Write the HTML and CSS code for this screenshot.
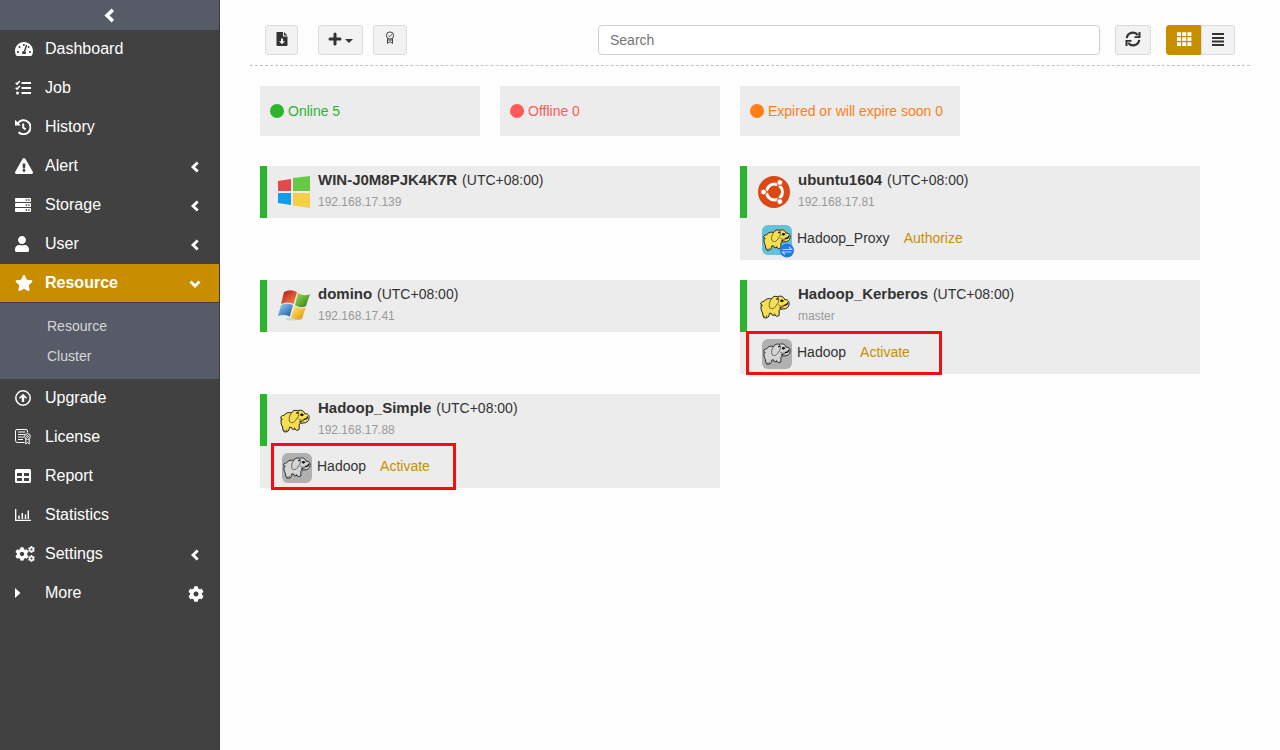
FILE: index.html
```html
<!DOCTYPE html>
<html lang="en">
<head>
<meta charset="utf-8">
<title>Resource</title>
<link rel="stylesheet" href="styles.css">
</head>
<body>
<svg class="sprite" aria-hidden="true">
  <symbol id="chev-left" viewBox="0 0 12 12"><path d="M8.700 1.500 4 6l4.700 4.500" fill="none" stroke="currentColor" stroke-width="2.800"/></symbol>
  <symbol id="chev-down" viewBox="0 0 12 12"><path d="M1.500 3.500 6 8l4.500-4.500" fill="none" stroke="currentColor" stroke-width="2.800"/></symbol>
  <symbol id="cog" viewBox="0 0 512 512"><path fill="currentColor" d="M487.4 315.7l-42.6-24.6c4.3-23.2 4.3-47 0-70.2l42.6-24.6c4.9-2.8 7.1-8.6 5.5-14-11.1-35.6-30-67.8-54.7-94.6-3.8-4.1-10-5.1-14.8-2.3L380.8 110c-17.9-15.4-38.5-27.3-60.8-35.1V25.8c0-5.6-3.9-10.5-9.4-11.7-36.7-8.2-74.3-7.8-109.2 0-5.5 1.2-9.4 6.1-9.4 11.7V75c-22.2 7.9-42.8 19.8-60.8 35.1L88.7 85.5c-4.9-2.8-11-1.9-14.8 2.3-24.7 26.7-43.6 58.9-54.7 94.6-1.7 5.4.6 11.2 5.5 14L67.3 221c-4.3 23.2-4.3 47 0 70.2l-42.6 24.6c-4.9 2.8-7.1 8.6-5.5 14 11.1 35.6 30 67.8 54.7 94.6 3.8 4.1 10 5.1 14.8 2.3l42.6-24.6c17.9 15.4 38.5 27.3 60.8 35.1v49.2c0 5.6 3.9 10.5 9.4 11.7 36.7 8.2 74.3 7.8 109.2 0 5.5-1.2 9.4-6.1 9.4-11.7v-49.2c22.2-7.9 42.8-19.8 60.8-35.1l42.6 24.6c4.9 2.8 11 1.9 14.8-2.3 24.7-26.7 43.6-58.9 54.7-94.6 1.5-5.5-.7-11.3-5.6-14.1zM256 336c-44.1 0-80-35.9-80-80s35.9-80 80-80 80 35.9 80 80-35.9 80-80 80z"/></symbol>
  <symbol id="elephant" viewBox="0 0 90 70">
    <path class="skin line" d="M12 18C18 10 27 8 34 11 37 4 46 1 53 4 63 0 72 4 74 13 84 12 89 19 87 28 86 36 79 41 70 41L62 42 57 46C58 51 58 56 57 61L49 63 45 59 37 60 34 54 28 54C28 60 27 65 22 67L13 68 9 62 8 53C3 46 2 37 4 29L2 23 7 19Z"/>
    <path class="line thin" d="M34 11C28 19 26 29 29 37 36 43 43 39 47 33L53 24C57 20 57 10 53 5M58 42C61 37 67 36 72 34M55 28C59 33 66 34 71 31M13 62V67M20 60V66M43 54 47 61M4 29 9 31"/>
    <path class="ink" d="M62 13Q69 11 72 17L66 21 60 18ZM48 10 54 8 56 11 50 14ZM71 28Q80 29 82 20L85 24Q82 34 71 32ZM59 36 64 34 64 38 59 40Z"/>
  </symbol>
</svg>
<div class="app">
  <aside class="sidebar">
    <button class="collapse" aria-label="Collapse menu"><svg class="ic-collapse"><use href="#chev-left"/></svg></button>
    <nav>
      <a class="item" href="#"><span class="icon"><svg width="18" height="16" viewBox="0 0 576 512"><path fill="currentColor" d="M288 32C128.94 32 0 160.94 0 320c0 52.8 14.25 102.26 39.06 144.8 5.61 9.62 16.3 15.2 27.44 15.2h443c11.14 0 21.83-5.58 27.44-15.2C561.75 422.26 576 372.8 576 320c0-159.06-128.94-288-288-288zm0 64c14.71 0 26.58 10.13 30.32 23.65-1.11 2.26-2.64 4.23-3.45 6.67l-9.22 27.67c-5.13 3.49-10.97 6.01-17.64 6.01-17.67 0-32-14.33-32-32S270.33 96 288 96zM96 384c-17.67 0-32-14.33-32-32s14.33-32 32-32 32 14.33 32 32-14.33 32-32 32zm48-160c-17.67 0-32-14.33-32-32s14.33-32 32-32 32 14.33 32 32-14.33 32-32 32zm246.77-72.41l-61.33 184C343.13 347.33 352 364.54 352 384c0 11.72-3.38 22.55-8.88 32H232.88c-5.5-9.45-8.88-20.28-8.88-32 0-33.94 26.5-61.43 59.9-63.59l61.34-184.01c4.17-12.56 17.73-19.45 30.36-15.17 12.57 4.19 19.35 17.79 15.17 30.36zm14.66 57.2l15.52-46.55c3.47-1.29 7.13-2.23 11.05-2.23 17.67 0 32 14.33 32 32s-14.33 32-32 32c-11.38-.01-20.89-6.28-26.57-15.22zM480 384c-17.67 0-32-14.33-32-32s14.33-32 32-32 32 14.33 32 32-14.33 32-32 32z"/></svg></span>Dashboard</a>
      <a class="item" href="#"><span class="icon"><svg width="17" height="16" viewBox="0 0 17 16" fill="none" stroke="currentColor"><path stroke-width="2" d="M6.5 3H16M6.5 8H16M6.5 13H16"/><path stroke-width="1.5" d="m.7 2.8 1.3 1.3L4.8 1M.7 7.8 2 9.1 4.8 6"/><circle cx="2.5" cy="13" r="1.5" fill="currentColor" stroke="none"/></svg></span>Job</a>
      <a class="item" href="#"><span class="icon"><svg width="16" height="16" viewBox="0 0 16 16" fill="none" stroke="currentColor"><path stroke-width="2" d="M2.7 4.4A7 7 0 1 1 3.6 13.2M8.2 4.5v4l2.4 1.9"/><path fill="currentColor" stroke="none" d="M0 .8V6.5h5.8Z"/></svg></span>History</a>
      <a class="item" href="#"><span class="icon"><svg width="18" height="16" viewBox="0 0 576 512"><path fill="currentColor" d="M569.517 440.013C587.975 472.007 564.806 512 527.94 512H48.054c-36.937 0-59.999-40.055-41.577-71.987L246.423 23.985c18.467-32.009 64.72-31.951 83.154 0l239.94 416.028zM288 354c-25.405 0-46 20.595-46 46s20.595 46 46 46 46-20.595 46-46-20.595-46-46-46zm-43.673-165.346l7.418 136c.347 6.364 5.609 11.346 11.982 11.346h48.546c6.373 0 11.635-4.982 11.982-11.346l7.418-136c.375-6.874-5.098-12.654-11.982-12.654h-63.383c-6.884 0-12.356 5.78-11.981 12.654z"/></svg></span>Alert<svg class="arrow"><use href="#chev-left"/></svg></a>
      <a class="item" href="#"><span class="icon"><svg width="16" height="16" viewBox="0 0 16 16"><path fill="currentColor" fill-rule="evenodd" d="M.7 1h14.6q.7 0 .7.7v2.6q0 .7-.7.7H.7Q0 5 0 4.300V1.700Q0 1 .7 1ZM10.700 2.300v1.400h1.400V2.300Zm2.500 0v1.400h1.400V2.300ZM.7 6h14.600q.7 0 .7.7v2.600q0 .7-.7.7H.7Q0 10 0 9.300V6.700Q0 6 .7 6Zm10 1.300v1.400h1.400V7.300Zm2.500 0v1.400h1.400V7.300ZM.7 11h14.600q.7 0 .7.7v2.600q0 .7-.7.7H.7Q0 15 0 14.300v-2.600Q0 11 .7 11Zm10 1.300v1.400h1.400v-1.400Zm2.500 0v1.400h1.400v-1.400Z"/></svg></span>Storage<svg class="arrow"><use href="#chev-left"/></svg></a>
      <a class="item" href="#"><span class="icon"><svg width="14" height="16" viewBox="0 0 448 512"><path fill="currentColor" d="M224 256c70.7 0 128-57.3 128-128S294.7 0 224 0 96 57.3 96 128s57.3 128 128 128zm89.6 32h-16.7c-22.2 10.2-46.9 16-72.9 16s-50.6-5.8-72.9-16h-16.7C60.2 288 0 348.2 0 422.4V464c0 26.500 21.500 48 48 48h352c26.500 0 48-21.500 48-48v-41.600c0-74.200-60.200-134.400-134.400-134.400z"/></svg></span>User<svg class="arrow"><use href="#chev-left"/></svg></a>
      <a class="item active" href="#"><span class="icon"><svg width="18" height="16" viewBox="0 0 576 512"><path fill="currentColor" d="M259.3 17.8L194 150.2 47.9 171.5c-26.2 3.8-36.7 36.1-17.7 54.6l105.7 103-25 145.5c-4.5 26.3 23.2 46 46.4 33.7L288 439.6l130.7 68.7c23.2 12.2 50.9-7.4 46.4-33.7l-25-145.5 105.7-103c19-18.5 8.5-50.8-17.7-54.6L382 150.2 316.7 17.8c-11.7-23.6-45.6-23.9-57.4 0z"/></svg></span>Resource<svg class="arrow"><use href="#chev-down"/></svg></a>
      <div class="submenu"><a href="#">Resource</a><a href="#">Cluster</a></div>
      <a class="item" href="#"><span class="icon"><svg width="16" height="16" viewBox="0 0 16 16"><circle cx="8" cy="8" r="7.200" fill="none" stroke="currentColor" stroke-width="1.500"/><path fill="currentColor" d="m8 3.700 4 4.100-1 1L9.200 7.300V12H6.800V7.300L5 8.800l-1-1Z"/></svg></span>Upgrade</a>
      <a class="item" href="#"><span class="icon"><svg width="16" height="16" viewBox="0 0 16 16" fill="none" stroke="currentColor"><path d="M12.500 3.500v-1.500q0-1.500-1.500-1.500H2Q.5.500.5 2v9.500q0 2 2 2H9.500M3 3h7.500M3 5.500h7M3 8h6M3 10.500h5"/><circle cx="12.500" cy="7.500" r="2.800"/><circle cx="12.500" cy="7.500" r=".9"/><path d="M10.800 10v5l1.700-1.500 1.700 1.500v-5"/></svg></span>License</a>
      <a class="item" href="#"><span class="icon"><svg width="16" height="16" viewBox="0 0 16 16"><path fill="currentColor" fill-rule="evenodd" d="M1.500 1h13Q16 1 16 2.500v11q0 1.500-1.500 1.500h-13Q0 15 0 13.500v-11Q0 1 1.500 1ZM2 5v3h5V5Zm7 0v3h5V5ZM2 10v3h5v-3Zm7 0v3h5v-3Z"/></svg></span>Report</a>
      <a class="item" href="#"><span class="icon"><svg width="16" height="16" viewBox="0 0 16 16" fill="none" stroke="currentColor"><path stroke-width="1.300" d="M.7 2v11.400H16"/><path stroke-width="1.500" d="M4 8.500V12M7.300 6v6M10.500 7.500V12M13.300 3.500V12"/></svg></span>Statistics</a>
      <a class="item" href="#"><span class="icon"><svg width="20" height="16" viewBox="0 0 20 16"><use href="#cog" x="0" y="1" width="14" height="14"/><use href="#cog" x="13" y="0" width="7" height="7"/><use href="#cog" x="13" y="9" width="7" height="7"/></svg></span>Settings<svg class="arrow"><use href="#chev-left"/></svg></a>
      <a class="item" href="#"><span class="icon"><svg width="6" height="10" viewBox="0 0 6 10"><path fill="currentColor" d="M0 0l5.500 5L0 10Z"/></svg></span>More<svg class="gear"><use href="#cog"/></svg></a>
    </nav>
  </aside>
  <main>
    <div class="toolbar">
      <button class="btn download" aria-label="Download"><svg width="12" height="16" viewBox="0 0 12 16"><path fill="#333" fill-rule="evenodd" d="M1 1h6v4.500h4.500V14q0 1-1 1H1.500q-1 0-1-1V1.500ZM5 7.500v2.800H3l3 3 3-3H7V7.500ZM8 1l3.500 3.500H8Z"/></svg></button>
      <button class="btn add" aria-label="Add"><svg width="26" height="16" viewBox="0 0 26 16"><path fill="none" stroke="#333" stroke-width="3" stroke-linecap="round" d="M7 3v10M2 8h10"/><path fill="#333" d="M17 8h8l-4 4Z"/></svg></button>
      <button class="btn badge" aria-label="License"><svg width="10" height="14" viewBox="0 0 10 14" fill="none" stroke="#444"><circle cx="5" cy="4.500" r="3.600"/><path d="m3.300 4.500 1.300 1.300L7 3.200M2.500 7.500v5L5 10.500l2.500 2v-5M2.500 9h5"/></svg></button>
      <input class="search" type="search" placeholder="Search" aria-label="Search">
      <button class="btn refresh" aria-label="Refresh"><svg width="16" height="16" viewBox="0 0 16 16" fill="none" stroke="#333"><path stroke-width="2.200" d="M1.800 7.200a6.100 6.100 0 0 1 11-3M14.200 8.800a6.100 6.100 0 0 1-11 3"/><path fill="#333" stroke="none" d="M15.500 1v6H9.500V5.200h4V1ZM.5 15V9h6v1.800h-4V15Z"/></svg></button>
      <div class="views">
        <button class="btn grid-view" aria-label="Grid view"><svg width="16" height="16" viewBox="0 0 16 16"><path stroke="#fff" stroke-width="3.800" stroke-dasharray="4 1.200" d="M1 3.200h15M1 8.200h15M1 13.200h15"/></svg></button>
        <button class="btn list-view" aria-label="List view"><svg width="14" height="16" viewBox="0 0 14 16"><path stroke="#333" stroke-width="2" d="M1 3h12M1 7h12M1 10.500h12M1 14h12"/></svg></button>
      </div>
    </div>
    <div class="stats">
      <div class="stat online"><i></i>Online 5</div>
      <div class="stat offline"><i></i>Offline 0</div>
      <div class="stat expired"><i></i>Expired or will expire soon 0</div>
    </div>
    <div class="cards">
      <article class="card"><div class="host">
        <svg class="os" viewBox="0 0 32 32"><path fill="#e14b4b" d="m0 5 13-2v12H0Z"/><path fill="#68c944" d="m15 2 17-2v15H15Z"/><path fill="#0f9fe8" d="M0 17h13v12L0 27Z"/><path fill="#f7ce47" d="M15 17h17v15l-17-2.500Z"/></svg>
        <div><p class="name"><b>WIN-J0M8PJK4K7R</b> (UTC+08:00)</p><p class="ip">192.168.17.139</p></div>
      </div></article>
      <article class="card"><div class="host">
        <svg class="os" viewBox="0 0 32 32"><circle cx="16" cy="16" r="16" fill="#dc4814"/><circle cx="16.500" cy="16" r="8" fill="none" stroke="#fff" stroke-width="3"/><path stroke="#dc4814" stroke-width="1.500" d="M16.500 16H5M16.500 16l6-10.400M16.500 16l6 10.400"/><g fill="#fff" stroke="#dc4814"><circle cx="5.500" cy="16" r="2.900"/><circle cx="21.800" cy="6.500" r="2.900"/><circle cx="21.800" cy="25.500" r="2.900"/></g><circle cx="16.500" cy="16" r="6" fill="#dc4814"/></svg>
        <div><p class="name"><b>ubuntu1604</b> (UTC+08:00)</p><p class="ip">192.168.17.81</p></div>
      </div>
      <div class="agent"><svg class="app-icon" viewBox="0 0 32 33"><rect width="30" height="30" rx="6" fill="#68bfd8"/><use href="#elephant" x="1" y="4" width="28" height="22"/><circle cx="25" cy="25.500" r="7" fill="#1e78f5"/><path fill="none" stroke="#b9dbff" stroke-width="1.200" d="M20.500 24.500h9L27 22M29.500 27h-9l2.500 2.500"/></svg><span>Hadoop_Proxy</span><a href="#">Authorize</a></div></article>
      <article class="card"><div class="host">
        <svg class="os" viewBox="0 0 32 32"><defs><linearGradient id="wr" x2="1" y2="1"><stop stop-color="#a91610"/><stop offset="1" stop-color="#ff8950"/></linearGradient><linearGradient id="wg" x2="1" y2="1"><stop stop-color="#a8dc5c"/><stop offset="1" stop-color="#237d18"/></linearGradient><linearGradient id="wb" x2="1" y2="1"><stop stop-color="#9cd4f5"/><stop offset="1" stop-color="#1753a5"/></linearGradient><linearGradient id="wy" x2="1" y2="1"><stop stop-color="#fff174"/><stop offset="1" stop-color="#e58a0c"/></linearGradient></defs><ellipse cx="16" cy="29" rx="9" ry="1.500" fill="#d4d4d4"/><path fill="url(#wr)" d="M6 2q6-3.500 13 0l-3.300 12q-6-3-12.700 0Z"/><path fill="url(#wg)" d="M20 3q6 4 12 1l-4 12q-5 3-11-1Z"/><path fill="url(#wb)" d="M3 15q6-3 12 0l-3.200 11.500Q6 24 0 26Z"/><path fill="url(#wy)" d="M16.500 16q6 4 11.300 1.500L24 28.500q-5 3-11-1.500Z"/></svg>
        <div><p class="name"><b>domino</b> (UTC+08:00)</p><p class="ip">192.168.17.41</p></div>
      </div></article>
      <article class="card"><div class="host">
        <svg class="os" viewBox="0 0 32 32"><use href="#elephant" x="2" y="5" width="30" height="24"/></svg>
        <div><p class="name"><b>Hadoop_Kerberos</b> (UTC+08:00)</p><p class="ip">master</p></div>
      </div>
      <div class="agent gray"><svg class="app-icon" viewBox="0 0 32 33"><rect width="30" height="30" rx="6" fill="#b0b0b0"/><use href="#elephant" x="1" y="4" width="28" height="22"/></svg><span>Hadoop</span><a href="#">Activate</a></div><div class="mark mark-kerberos"></div></article>
      <article class="card"><div class="host">
        <svg class="os" viewBox="0 0 32 32"><use href="#elephant" x="2" y="5" width="30" height="24"/></svg>
        <div><p class="name"><b>Hadoop_Simple</b> (UTC+08:00)</p><p class="ip">192.168.17.88</p></div>
      </div>
      <div class="agent gray"><svg class="app-icon" viewBox="0 0 32 33"><rect width="30" height="30" rx="6" fill="#b0b0b0"/><use href="#elephant" x="1" y="4" width="28" height="22"/></svg><span>Hadoop</span><a href="#">Activate</a></div><div class="mark mark-simple"></div></article>
    </div>
  </main>
</div>
</body>
</html>
```
FILE: styles.css
```css
* { box-sizing: border-box; }
body { margin: 0; background: #fefefe; color: #333; font: 14px/20px "Liberation Sans", Arial, sans-serif; }
a { text-decoration: none; }
button { font: inherit; cursor: pointer; }
p { margin: 0; }
svg { display: block; flex: none; }
.sprite { position: absolute; width: 0; height: 0; }
.app { display: flex; min-height: 100vh; }

.sidebar { flex: none; width: 220px; background: #414141; border-right: 1px solid #3b3b3e; }
.collapse { display: flex; align-items: center; justify-content: center; width: 100%; height: 30px; padding: 0; border: 0; background: #565b67; color: #fff; }
.ic-collapse { width: 15px; height: 15px; }
.item { display: flex; align-items: center; height: 39px; padding: 0 15px; border-bottom: 1px solid #414141; color: #fff; font-size: 16px; }
.icon { display: flex; width: 30px; }
.item.active { background: #c88e00; font-weight: bold; }
.arrow { width: 12px; height: 12px; margin: 2px 3px 0 auto; }
.gear { width: 16px; height: 16px; margin: 2px 0 0 auto; }
.submenu { display: flex; flex-direction: column; padding: 8px 0; background: #565b67; }
.submenu a { padding-left: 47px; line-height: 30px; color: #d6d6d6; }

main { flex: 1; min-width: 0; padding: 25px 30px; }
.toolbar { display: flex; padding: 0 15px 10px; border-bottom: 1px dashed #c4c4c4; }
.btn { display: flex; align-items: center; justify-content: center; height: 30px; padding: 0 0 2px; border: 1px solid #dadada; border-radius: 3px; background: #f2f2f2; }
.download { width: 33px; margin-right: 20px; }
.add { width: 45px; margin-right: 10px; }
.badge { width: 34px; padding-bottom: 4px; }
.search { width: 502px; height: 30px; margin: 0 15px 0 auto; padding: 0 11px; border: 1px solid #ccd0d6; border-radius: 4px; background: #fff; color: #333; font: inherit; appearance: none; }
.search::placeholder { color: #757575; }
.refresh { width: 36px; margin-right: 15px; }
.views { display: flex; }
.grid-view { width: 35px; border-color: #c88e00; border-radius: 3px 0 0 3px; background: #c88e00; }
.list-view { width: 34px; border-radius: 0 3px 3px 0; }

.stats { display: grid; grid-template-columns: repeat(4, 1fr); gap: 20px; padding: 20px 50px 30px 10px; }
.stat { display: flex; align-items: center; gap: 4px; height: 50px; padding: 0 10px; background: #ececec; white-space: nowrap; }
.stat i { width: 14px; height: 14px; border-radius: 50%; background: currentColor; }
.online { color: #2bb52b; }
.offline { color: #ff5a5a; }
.expired { color: #ff7f16; }

.cards { display: grid; grid-template-columns: 1fr 1fr; grid-auto-rows: 94px; align-items: start; gap: 20px; padding: 0 50px 0 10px; }
.card { position: relative; background: #ececec; }
.host { display: flex; gap: 8px; height: 52px; padding: 4px 0 0 11px; border-left: 7px solid #2bb52b; }
.os { width: 32px; height: 32px; margin-top: 6px; }
.name b { margin-right: 1px; font-size: 15px; }
.ip { margin-top: 2px; color: #999; font-size: 12px; }
.agent { display: flex; align-items: center; height: 42px; padding: 0 0 2px 22px; }
.app-icon { width: 32px; height: 33px; margin: 7px 3px 0 0; }
.agent a { margin-left: 14px; color: #c88e00; }
.gray { --skin: #d5d5d5; }
.line { fill: none; stroke: #222; stroke-width: 3; stroke-linejoin: round; }
.thin { stroke-width: 2; }
.skin { fill: var(--skin, #f6df54); }
.ink { fill: #111; }
.mark { position: absolute; border: 3px solid #f90b12; pointer-events: none; }
.mark-kerberos { top: 51px; left: 6px; width: 196px; height: 44px; }
.mark-simple { top: 49px; left: 11px; width: 185px; height: 47px; }
```
